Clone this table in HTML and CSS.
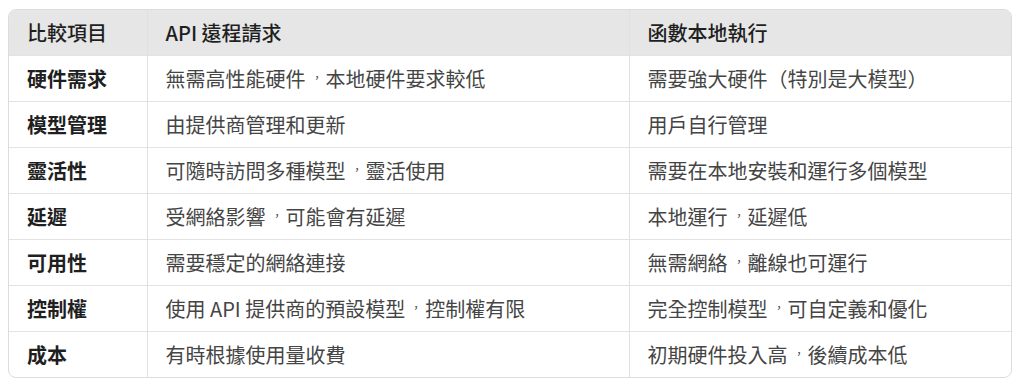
FILE: index.html
```html
<!DOCTYPE html>
<html lang="zh-TW">
<head>
<meta charset="utf-8">
<link rel="stylesheet" href="styles.css">
</head>
<body>
<div class="wrap">
<table class="cmp">
<thead>
<tr><th class="c1">比較項目</th><th class="c2">API 遠程請求</th><th class="c3">函數本地執行</th></tr>
</thead>
<tbody>
<tr><td class="c1">硬件需求</td><td>無需高性能硬件<span class="pc">，</span>本地硬件要求較低</td><td>需要強大硬件（特別是大模型）</td></tr>
<tr><td class="c1">模型管理</td><td>由提供商管理和更新</td><td>用戶自行管理</td></tr>
<tr><td class="c1">靈活性</td><td>可隨時訪問多種模型<span class="pc">，</span>靈活使用</td><td>需要在本地安裝和運行多個模型</td></tr>
<tr><td class="c1">延遲</td><td>受網絡影響<span class="pc">，</span>可能會有延遲</td><td>本地運行<span class="pc">，</span>延遲低</td></tr>
<tr><td class="c1">可用性</td><td>需要穩定的網絡連接</td><td>無需網絡<span class="pc">，</span>離線也可運行</td></tr>
<tr><td class="c1">控制權</td><td>使用 API 提供商的預設模型<span class="pc">，</span>控制權有限</td><td>完全控制模型<span class="pc">，</span>可自定義和優化</td></tr>
<tr><td class="c1">成本</td><td>有時根據使用量收費</td><td>初期硬件投入高<span class="pc">，</span>後續成本低</td></tr>
</tbody>
</table>
</div>
</body>
</html>
```
FILE: styles.css
```css
html, body {
  margin: 0;
  padding: 0;
  background: #ffffff;
}
body {
  font-family: "Noto Sans CJK TC", "Noto Sans", sans-serif;
  color: #454545;
}
.wrap {
  margin: 9px 12px 0 8px;
  width: 1004px;
  border: 1px solid #dcdcdc;
  border-radius: 8px;
  overflow: hidden;
  box-sizing: border-box;
}
.cmp {
  width: 100%;
  border-collapse: collapse;
  table-layout: fixed;
  font-size: 20px;
}
.cmp th, .cmp td {
  height: 46px;
  padding: 0 0 0 18px;
  text-align: left;
  vertical-align: middle;
  border-left: 1px solid #e0e0e0;
  border-top: 1px solid #e3e3e3;
  box-sizing: border-box;
  white-space: nowrap;
  font-weight: 400;
}
.cmp th:first-child, .cmp td:first-child {
  border-left: none;
}
.cmp thead th {
  border-top: none;
  background: #e6e6e6;
  color: #1f1f1f;
  font-weight: 500;
  height: 45px;
}
.cmp td.c1 {
  font-weight: 700;
  color: #1f1f1f;
}
.cmp th.c1 { width: 138px; }
.cmp th.c2 { width: 482px; }
.pc {
  display: inline-block;
  transform: translate(0.05em, -0.06em) scale(0.55);
}
```
